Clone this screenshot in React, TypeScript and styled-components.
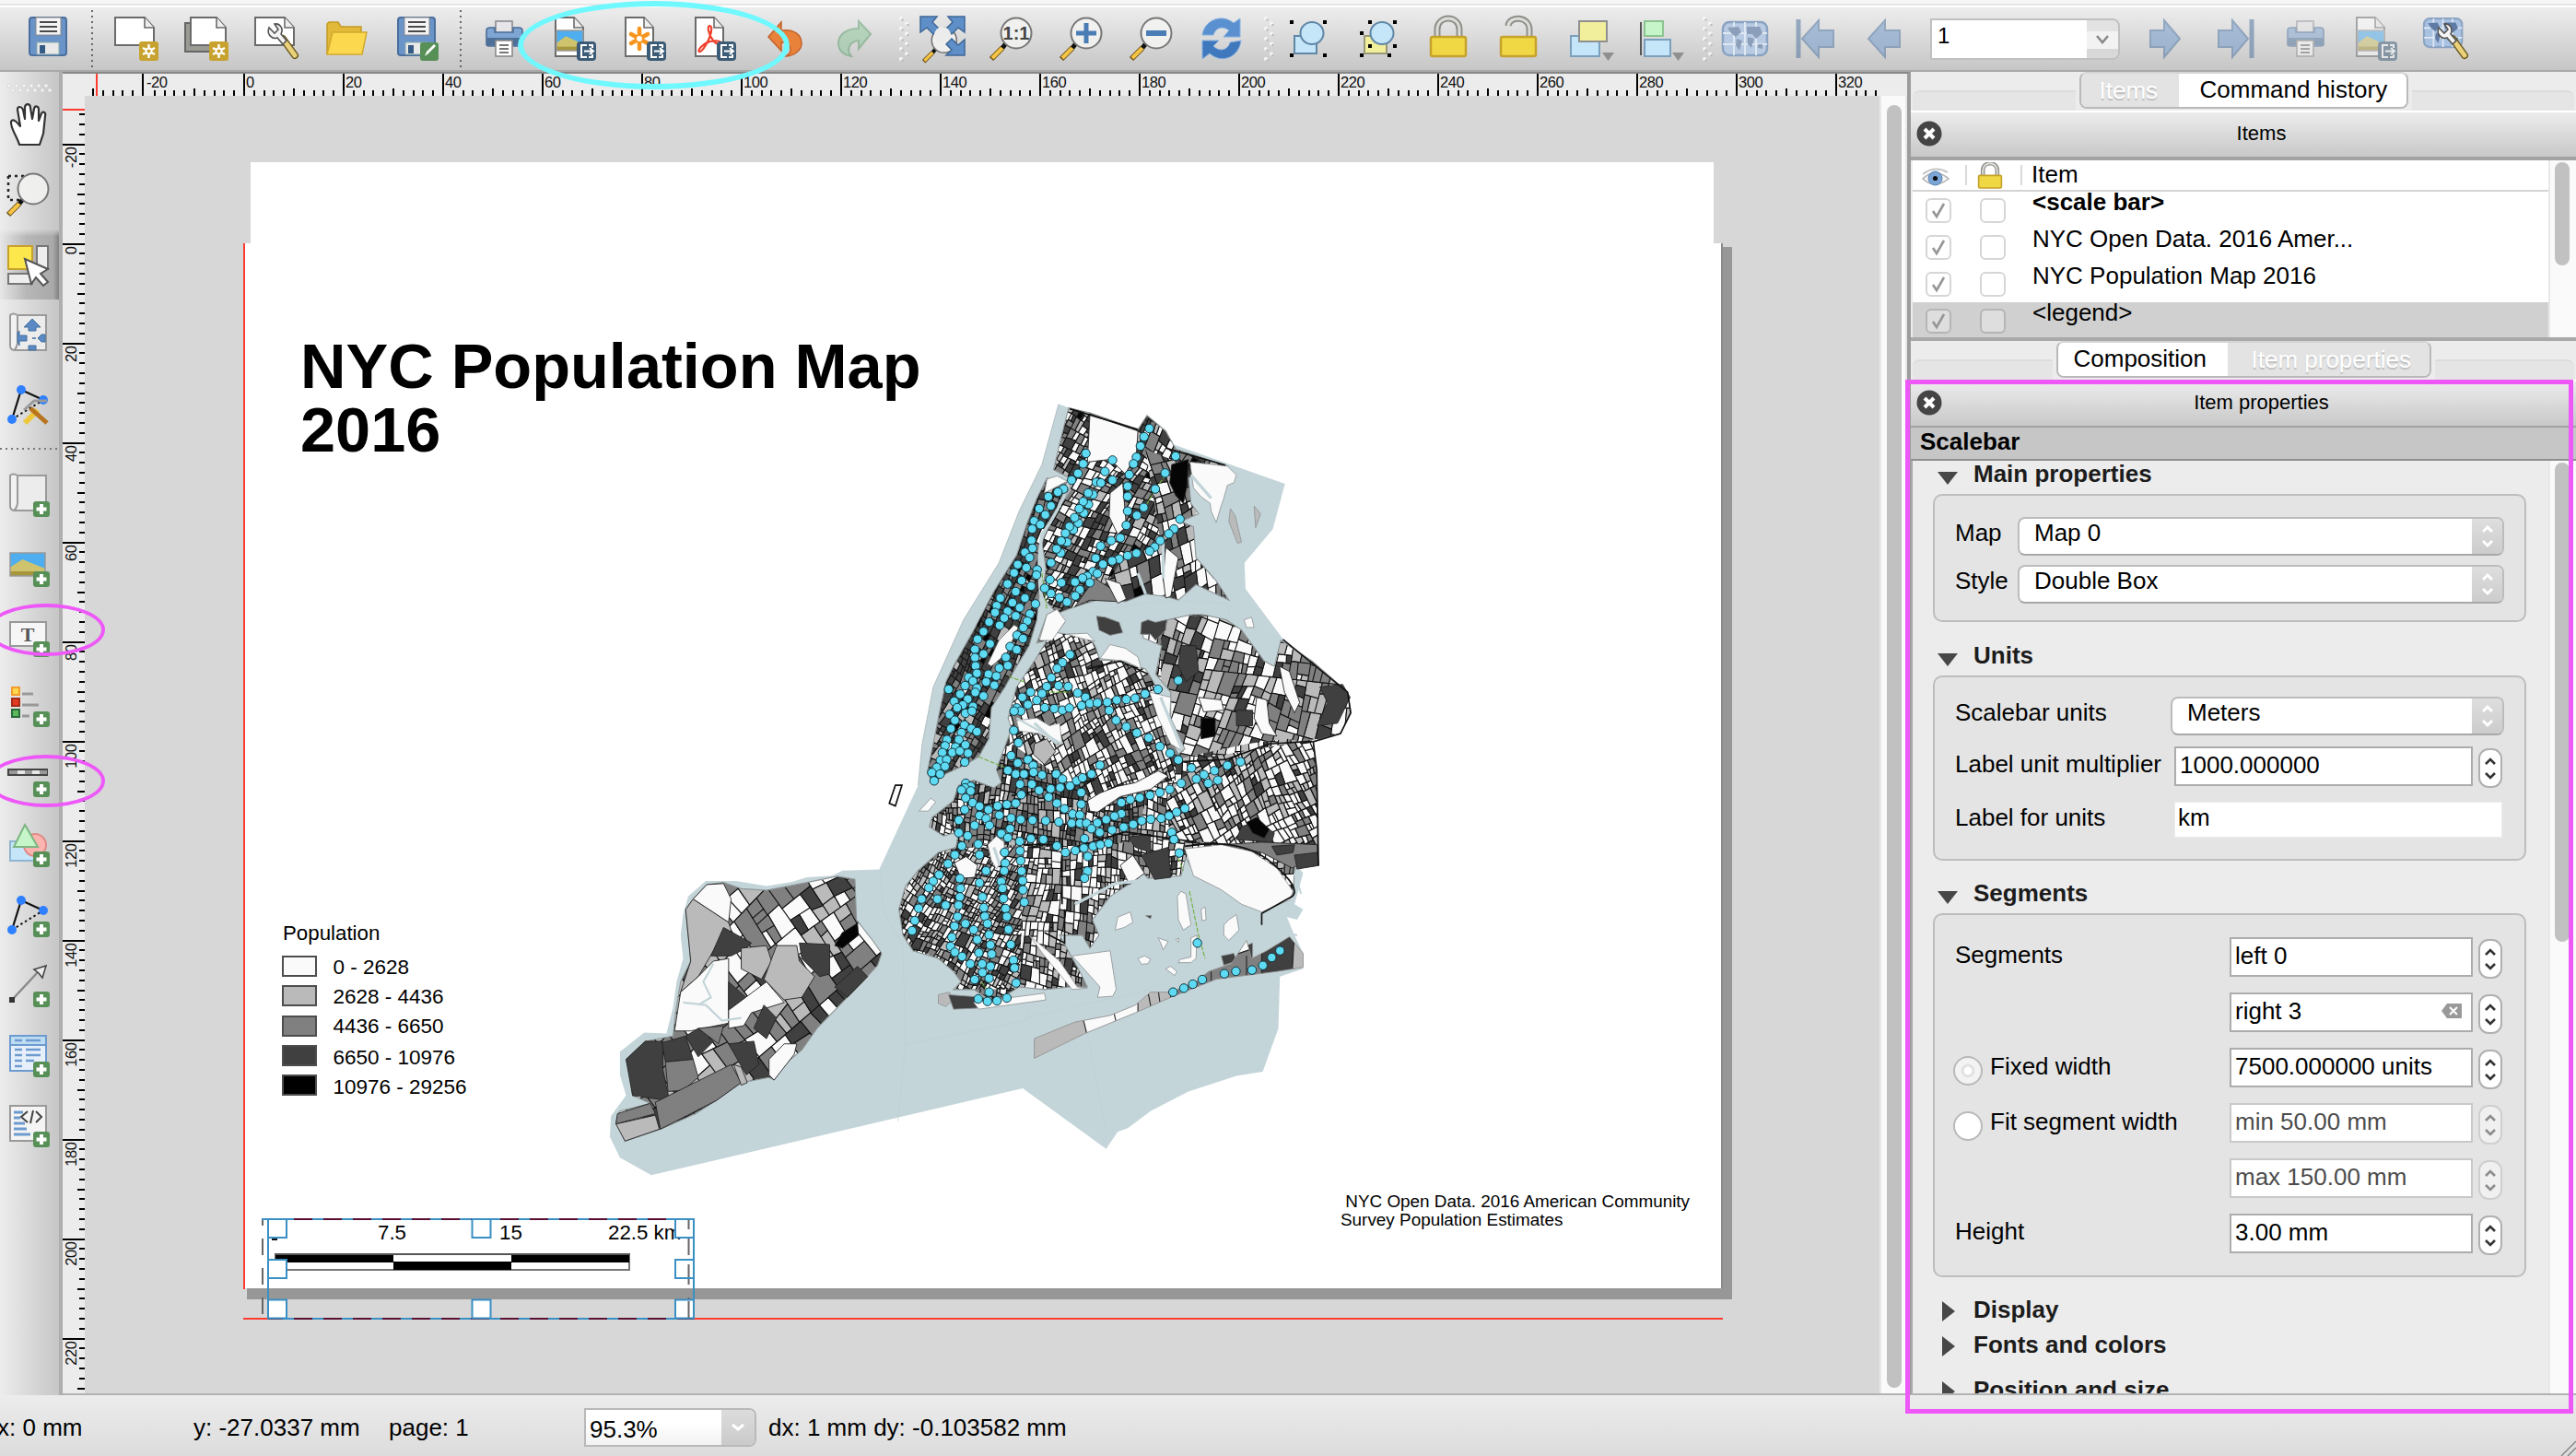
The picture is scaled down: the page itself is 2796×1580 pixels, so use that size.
import React from 'react';
import styled, { createGlobalStyle, css } from 'styled-components';

const GlobalStyle = createGlobalStyle`
  html, body { margin: 0; padding: 0; background: #ececec; }
  * { box-sizing: border-box; }
  body { font-family: "Liberation Sans", Arial, Helvetica, sans-serif; font-size: 26px; color: #000; }
`;

/* ---------- window frame ---------- */

const Window = styled.div`
  position: relative;
  display: flex;
  flex-direction: column;
  width: 2796px;
  height: 1580px;
  overflow: hidden;
  background: #ececec;
`;

const TopStrip = styled.div`
  flex: none;
  height: 8px;
  background: linear-gradient(#f6f6f6 0 4px, #e6e6e6 4px 6px, #fff 6px 8px);
`;

const Toolbar = styled.div`
  flex: none;
  display: flex;
  align-items: center;
  height: 70px;
  padding-left: 14px;
  background: linear-gradient(#ededed, #c6c6c6);
  border-bottom: 2px solid #a9a9a9;
  position: relative;
`;

const Body = styled.div`
  flex: none;
  display: flex;
  height: 1436px;
`;

const ToolSlot = styled.div<{ $faded?: boolean }>`
  flex: none;
  display: flex;
  align-items: center;
  justify-content: center;
  width: 76px;
  height: 68px;
  opacity: ${p => (p.$faded ? 0.5 : 1)};
`;

const Icon = styled.svg`
  display: block;
  width: 48px;
  height: 48px;
  overflow: visible;
`;

const VSeparator = styled.div`
  flex: none;
  width: 20px;
  height: 62px;
  background: repeating-linear-gradient(#666 0 2px, transparent 2px 6px) 9px 0 / 2px 100% no-repeat;
`;

const Grip = styled.svg<{ $w: number }>`
  flex: none;
  display: block;
  width: ${p => p.$w}px;
  height: 50px;
  overflow: visible;
`;

const PageCombo = styled.div`
  flex: none;
  display: flex;
  width: 206px;
  height: 45px;
  margin: 0 12px 0 11px;
  border: 2px solid #c0c0c0;
  border-radius: 0 8px 8px 0;
  background: #d6d6d6;
`;

const PageValue = styled.div`
  width: 168px;
  padding-left: 6px;
  background: #fff;
  line-height: 33px;
  font-size: 24px;
`;

const PageArrow = styled.div`
  flex: 1;
  display: flex;
  align-items: center;
  justify-content: center;
  padding-top: 4px;
  background: linear-gradient(#e2e2e2 0 30%, #f2f2f2 30% 75%, #d8d8d8 75%);
  border-radius: 0 6px 6px 0;
`;

/* ---------- left tools ---------- */

const SideTools = styled.div`
  flex: none;
  display: flex;
  flex-direction: column;
  width: 68px;
  padding-top: 2px;
  background: linear-gradient(90deg, #ececec, #c6c6c6);
  border-right: 4px solid #aeaeae;
`;

const SideSlot = styled.div<{ $active?: boolean }>`
  flex: none;
  display: flex;
  align-items: center;
  height: 76px;
  padding-left: 7px;
  ${p => p.$active && css`
    background: linear-gradient(90deg, rgba(0,0,0,.02), rgba(0,0,0,.16) 45%, rgba(0,0,0,.16) 90%, rgba(0,0,0,.35));
    mask-image: linear-gradient(#0000, #000 10%, #000 88%, #000);
  `}
`;

const SideGrip = styled.svg`
  flex: none;
  display: block;
  width: 64px;
  height: 17px;
  overflow: visible;
`;

const HSeparator = styled.div`
  flex: none;
  height: 22px;
  background: repeating-linear-gradient(90deg, #777 0 2px, transparent 2px 6px) 0 9px / 100% 2px no-repeat;
`;

/* ---------- centre ---------- */

const Centre = styled.div`
  flex: none;
  display: grid;
  grid-template-columns: 24px 1948px 30px;
  grid-template-rows: 24px 1408px;
  width: 2006px;
  border-top: 2px solid #888;
  border-right: 4px solid #9c9c9c;
  border-bottom: 2px solid #b2b2b2;
  background: #ececec;
`;

const HRuler = styled.svg`
  grid-column: 1 / 4;
  display: block;
  width: 2002px;
  height: 24px;
`;

const VRuler = styled.svg`
  display: block;
  width: 24px;
  height: 1408px;
`;

const Viewport = styled.div`
  position: relative;
  overflow: hidden;
  background: #d7d7d7;
`;

const ScrollTrack = styled.div`
  background: #fafafa;
  border-left: 2px solid #e8e8e8;
  border-right: 2px solid #e8e8e8;
  padding: 10px 4px 6px 6px;
`;

const ScrollThumb = styled.div<{ $h?: number }>`
  width: 16px;
  height: ${p => (p.$h ? p.$h + 'px' : '100%')};
  border-radius: 8px;
  background: #c1c1c1;
`;

/* The scene uses window pixels as its coordinate system. */
const Scene = styled.div`
  position: absolute;
  left: -92px;
  top: -104px;
  width: 2200px;
  height: 1600px;
`;

const Sheet = styled.div<{ $x: number; $y: number; $w: number; $h: number; $c: string }>`
  position: absolute;
  left: ${p => p.$x}px;
  top: ${p => p.$y}px;
  width: ${p => p.$w}px;
  height: ${p => p.$h}px;
  background: ${p => p.$c};
`;

const SceneText = styled.div<{ $x: number; $y: number; $s: number; $b?: boolean }>`
  position: absolute;
  left: ${p => p.$x}px;
  top: ${p => p.$y - p.$s * 0.8465}px;
  font-size: ${p => p.$s}px;
  font-weight: ${p => (p.$b ? 700 : 400)};
  line-height: 1;
  white-space: pre;
`;

const MapDrawing = styled.svg`
  position: absolute;
  left: 640px;
  top: 420px;
  width: 860px;
  height: 880px;
`;

const SelectionDrawing = styled.svg`
  position: absolute;
  left: 280px;
  top: 1316px;
  width: 480px;
  height: 120px;
`;

/* ---------- right dock ---------- */

const Dock = styled.div`
  flex: none;
  display: flex;
  flex-direction: column;
  width: 722px;
  border-bottom: 2px solid #b2b2b2;
`;

const TabStrip = styled.div`
  flex: none;
  display: flex;
  justify-content: center;
  height: 42px;
  padding: 0 2px;
  &::before, &::after {
    content: "";
    flex: 1;
    margin-top: 20px;
    border-top: 2px solid #dcdcdc;
    background: #e5e5e5;
  }
  &::before { margin-right: 4px; border-top-left-radius: 8px; }
  &::after { margin-left: 4px; border-top-right-radius: 8px; }
`;

const TabGroup = styled.div`
  flex: none;
  display: flex;
  height: 40px;
  border: 2px solid #b9b9b9;
  border-top-color: #d5d5d5;
  border-radius: 8px;
  overflow: hidden;
`;

const Tab = styled.div<{ $w: number; $pl: number; $lit?: boolean }>`
  width: ${p => p.$w}px;
  padding-left: ${p => p.$pl}px;
  line-height: ${p => (p.$lit ? 35 : 37)}px;
  white-space: nowrap;
  color: ${p => (p.$lit ? '#000' : '#fff')};
  background: ${p => (p.$lit ? '#fff' : '#e3e3e3')};
  text-shadow: ${p => (p.$lit ? 'none' : '0 2px 1px #bdbdbd')};
`;

const DockTitle = styled.div<{ $line: number }>`
  flex: none;
  display: grid;
  grid-template-columns: 40px 1fr;
  align-items: center;
  height: ${p => 50 + p.$line}px;
  border-top: 2px solid #fff;
  border-bottom: ${p => p.$line}px solid #a2a2a2;
  background: linear-gradient(#ececec, #c8c8c8);
  font-size: 22px;
`;

const DockName = styled.div`
  padding: 0 1px 3px 0;
  text-align: center;
`;

const CloseIcon = styled.svg`
  width: 28px;
  height: 28px;
  margin: -2px 0 0 6px;
`;

const ItemArea = styled.div`
  flex: none;
  display: flex;
  height: 196px;
  padding-left: 2px;
  border-bottom: 4px solid #a9a9a9;
`;

const ItemTable = styled.div`
  width: 690px;
  overflow: hidden;
  background: #fff;
`;

const HeadRow = styled.div`
  display: grid;
  grid-template-columns: 59px 60px 1fr;
  height: 34px;
  border-bottom: 2px solid #d4d4d4;
`;

const HeadCell = styled.div`
  display: flex;
  padding: 2px 0 0 10px;
  line-height: 26px;
  background: linear-gradient(#d9d9d9, #d9d9d9) right 5px / 2px 22px no-repeat;
  &:last-child { background: none; }
`;

const ItemRow = styled.div<{ $sel?: boolean; $bold?: boolean }>`
  display: grid;
  grid-template-columns: 59px 60px 1fr;
  height: 40px;
  background: ${p => (p.$sel ? '#d0d0d0' : '#fff')};
  font-weight: ${p => (p.$bold ? 700 : 400)};
`;

const ItemName = styled.div`
  padding-left: 11px;
  line-height: 23px;
  white-space: nowrap;
`;

const Check = styled.div<{ $dim?: boolean }>`
  display: flex;
  width: 28px;
  height: 27px;
  margin: 7px 0 0 14px;
  border: 2px solid ${p => (p.$dim ? '#b5b5b5' : '#d6d6d6')};
  border-radius: 6px;
  background: ${p => (p.$dim ? '#dedede' : '#fff')};
`;

const SideTrack = styled.div`
  width: 30px;
  padding: 2px 0 0 5px;
  background: #fafafa;
  border-left: 2px solid #e8e8e8;
`;

const Subject = styled.div`
  flex: none;
  height: 36px;
  padding-left: 10px;
  line-height: 31px;
  font-weight: 700;
  background: #c6c6c6;
  border-bottom: 2px solid #8f8f8f;
`;

const PropArea = styled.div`
  flex: 1;
  min-height: 0;
  display: flex;
  overflow: hidden;
  border-left: 2px solid #a9a9a9;
`;

const PropList = styled.div`
  width: 690px;
  padding-left: 22px;
  overflow: hidden;
`;

const SectionHead = styled.div<{ $mt?: number }>`
  display: flex;
  height: 28px;
  margin-top: ${p => p.$mt ?? 0}px;
  line-height: 29px;
  font-weight: 700;
  color: #1c1c1c;
  white-space: nowrap;
`;

const Triangle = styled.svg`
  width: 24px;
  height: 24px;
  margin: 8px 16px 0 4px;
  overflow: visible;
`;

const Group = styled.div<{ $h: number; $pt: number }>`
  width: 644px;
  height: ${p => p.$h}px;
  margin-top: 8px;
  padding: ${p => p.$pt}px 24px 0 22px;
  border: 2px solid #bdbdbd;
  border-radius: 10px;
  background: #e4e4e4;
`;

const Row = styled.div<{ $h: number }>`
  display: flex;
  align-items: flex-start;
  height: ${p => p.$h}px;
`;

const RowLabel = styled.div<{ $lh: number }>`
  flex: 1;
  display: flex;
  line-height: ${p => p.$lh}px;
  white-space: nowrap;
`;

const SelectBox = styled.div<{ $w: number }>`
  flex: none;
  display: flex;
  width: ${p => p.$w}px;
  height: 42px;
  margin-right: -2px;
  border: 2px solid #bcbcbc;
  border-bottom-color: #a8a8a8;
  border-radius: 8px;
  background: #fff;
  overflow: hidden;
`;

const SelectValue = styled.div`
  flex: 1;
  padding-left: 16px;
  line-height: 31px;
`;

const SelectArrows = styled.div`
  display: flex;
  align-items: center;
  justify-content: center;
  width: 33px;
  background: linear-gradient(#dedede, #cccccc);
`;

const Field = styled.div<{ $w: number; $dim?: boolean }>`
  flex: none;
  display: flex;
  justify-content: space-between;
  align-items: flex-start;
  width: ${p => p.$w}px;
  height: 43px;
  padding: 0 10px 0 4px;
  border: 2px solid ${p => (p.$dim ? '#c9c9c9' : '#acacac')};
  background: #fff;
  color: ${p => (p.$dim ? '#4c4c4c' : '#000')};
  line-height: 37px;
  white-space: nowrap;
`;

const ClearMark = styled.svg`
  width: 22px;
  height: 18px;
  margin-top: 9px;
`;

const PlainField = styled.div`
  flex: none;
  width: 356px;
  height: 39px;
  padding-left: 3px;
  border: 1px solid #ececec;
  background: #fff;
  line-height: 33px;
`;

const Spinner = styled.div<{ $dim?: boolean }>`
  flex: none;
  display: flex;
  align-items: center;
  justify-content: center;
  width: 26px;
  height: 43px;
  margin: 2px 0 0 6px;
  border: 2px solid ${p => (p.$dim ? '#cfcfcf' : '#b0b0b0')};
  border-radius: 11px;
  background: ${p => (p.$dim ? '#f0f0f0' : '#fff')};
`;

const Radio = styled.div<{ $on?: boolean }>`
  width: 32px;
  height: 32px;
  margin: 9px 8px 0 -2px;
  border: 2px solid #b9b9b9;
  border-radius: 50%;
  background: ${p => (p.$on ? 'radial-gradient(circle, #fff 0 4px, #dedede 5px 6px, #f3f3f3 8px)' : '#fff')};
`;

/* ---------- status bar ---------- */

const StatusBar = styled.div`
  flex: none;
  display: flex;
  height: 66px;
  padding-top: 9px;
  background: linear-gradient(#ececec, #dcdcdc);
  line-height: 52px;
  white-space: nowrap;
  overflow: hidden;
`;

const StatusCell = styled.div<{ $w: number; $ml?: number }>`
  flex: none;
  width: ${p => p.$w}px;
  margin-left: ${p => p.$ml ?? 0}px;
`;

const ZoomCombo = styled.div`
  flex: none;
  display: flex;
  width: 187px;
  height: 42px;
  margin: 5px 13px 0 0;
  border: 2px solid #b9b9b9;
  border-radius: 0 8px 8px 0;
  background: linear-gradient(#fff 40%, #f2f2f2);
  line-height: 43px;
  padding-left: 4px;
`;

const ZoomArrow = styled.div`
  display: flex;
  align-items: center;
  justify-content: center;
  width: 36px;
  margin-left: auto;
  background: linear-gradient(#dcdcdc, #cacaca);
  border-radius: 0 6px 6px 0;
`;

/* ---------- highlighter marks ---------- */

const Ring = styled.div<{ $x: number; $y: number; $w: number; $h: number; $c: string; $b: number }>`
  position: absolute;
  left: ${p => p.$x}px;
  top: ${p => p.$y}px;
  width: ${p => p.$w}px;
  height: ${p => p.$h}px;
  border: ${p => p.$b}px solid ${p => p.$c};
  border-radius: 50%;
`;

const Frame = styled.div`
  position: absolute;
  left: 2068px;
  top: 412px;
  width: 725px;
  height: 1122px;
  border: 5px solid #ee58f8;
`;

const Resizer = styled.svg`
  position: absolute;
  right: 0;
  bottom: 0;
  width: 18px;
  height: 18px;
`;

/* ---------- icon parts ---------- */

const Disk = () => (
  <g>
    <rect x="4" y="1" width="40" height="41" rx="3" fill="#6a93c7" stroke="#4a6f9f" strokeWidth="2" />
    <rect x="11" y="1" width="27" height="19" fill="#f4f4f4" stroke="#8a8a8a" />
    <path d="M15 6h19M15 11h19M15 16h19" stroke="#4a4a4a" strokeWidth="2" />
    <rect x="12" y="28" width="24" height="13" fill="#e9e9e9" stroke="#8aa" />
    <rect x="15" y="31" width="6" height="9" fill="#365a86" />
  </g>
);
const Paper = ({ x = 0, w = 44, h = 31 }: { x?: number; w?: number; h?: number }) => (
  <g transform={`translate(${x} 0)`}>
    <path d={`M1 1H${w - 11}L${w - 1} 12V${h}H1Z`} fill="#fff" stroke="#6b6b6b" strokeWidth="2" />
    <path d={`M${w - 11} 1V12H${w - 1}`} fill="#eee" stroke="#6b6b6b" strokeWidth="1.6" />
  </g>
);
const StarBadge = () => (
  <g>
    <rect x="27" y="27" width="21" height="21" rx="3" fill="#c8a22e" />
    <path d="M37.500 30v15M31 34l13 7M44 34l-13 7" stroke="#fff" strokeWidth="2.400" />
    <circle cx="37.500" cy="37.500" r="3" fill="#c8a22e" stroke="#fff" strokeWidth="2" />
  </g>
);
const ExportBadge = () => (
  <g>
    <rect x="26" y="27" width="21" height="21" rx="4" fill="#3c5b77" />
    <path d="M37 31h-6v13h6M39 31h4v3M43 41v3h-4M34 37.500h9M40 34l4 3.500l-4 3.500" stroke="#fff" strokeWidth="2" fill="none" />
  </g>
);
const PlusBadge = () => (
  <g>
    <rect x="29" y="31" width="18" height="17" rx="3" fill="#579057" />
    <path d="M38 34v11M32.500 39.500h11" stroke="#fff" strokeWidth="4" />
  </g>
);
const Wrench = () => (
  <g>
    <path d="M31 24L44 42" stroke="#6d5a22" strokeWidth="8" strokeLinecap="round" />
    <path d="M31 24L44 42" stroke="#ead27a" strokeWidth="5" strokeLinecap="round" />
    <path d="M16 12c-3 7 3 13 9 11l6 7 4-4-6-7c3-6-1-12-7-11l4 6-4 4z" fill="#f4f4f4" stroke="#555" strokeWidth="1.600" />
  </g>
);
const Photo = ({ y = 14, w = 29, h = 22 }: { y?: number; w?: number; h?: number }) => (
  <g>
    <rect x="2" y={y} width={w} height={h} fill="#4eaef0" />
    <path d={`M2 ${y + h * 0.62}L${2 + w * 0.35} ${y + h * 0.28}L${2 + w} ${y + h * 0.68}V${y + h}H2Z`} fill="#cfc36d" />
    <path d={`M2 ${y + h * 0.8}H${2 + w}V${y + h}H2Z`} fill="#a8963c" />
    <rect x="2" y={y} width={w} height={h} fill="none" stroke="#999" strokeWidth="1.500" />
  </g>
);
const Printer = () => (
  <g>
    <rect x="14" y="5" width="18" height="14" fill="#e6e6e9" stroke="#8a8a95" strokeWidth="1.600" />
    <path d="M4 15q0-3 4-3h5v5h20v-5h6q4 0 4 3v15q0 2-3 2H7q-3 0-3-2z" fill="#7fa5d2" stroke="#4a6b96" strokeWidth="1.600" />
    <path d="M4 23h39v8H4z" fill="#4d7099" />
    <rect x="14" y="26" width="18" height="17" fill="#fff" stroke="#8a8a8a" strokeWidth="1.600" />
    <path d="M18 31h10M18 35h10M18 39h10" stroke="#777" strokeWidth="2" />
  </g>
);
const Lens = ({ children }: { children?: React.ReactNode }) => (
  <g>
    <path d="M14 34L2 46" stroke="#6b4e14" strokeWidth="6" />
    <path d="M14 34L3 45" stroke="#f5c445" strokeWidth="4" />
    <path d="M18 29l-4 5" stroke="#111" strokeWidth="5" />
    <circle cx="29" cy="18" r="16.500" fill="#f3f4f2" fillOpacity=".85" stroke="#777" strokeWidth="2" />
    {children}
  </g>
);
const Lock = ({ open }: { open?: boolean }) => (
  <g>
    <path
      d={open ? 'M36 23V14C36 -1 14 -1 13 10' : 'M12 23V14C12 -2 36 -2 36 14V23'}
      fill="none" stroke="#8f8f8a" strokeWidth="7" />
    <path
      d={open ? 'M36 23V14C36 -1 14 -1 13 10' : 'M12 23V14C12 -2 36 -2 36 14V23'}
      fill="none" stroke="#dcdcd8" strokeWidth="3" />
    <rect x="5" y="22" width="38" height="21" rx="2" fill="#efd843" stroke="#c6a12c" strokeWidth="2.500" />
  </g>
);
const Dots = ({ pts }: { pts: number[][] }) => (
  <g>{pts.map(([x, y], i) => <rect key={i} x={x - 2} y={y - 2} width="4" height="4" fill="#000" />)}</g>
);
const GlobeTile = ({ land = '#8b9fbb', tile = '#b9cbe2' }: { land?: string; tile?: string }) => (
  <g>
    <rect x="0" y="6" width="48" height="36" rx="7" fill={tile} stroke="#8ba3c2" strokeWidth="2.500" />
    <path d="M12 6v36M24 6v36M36 6v36M0 18h48M0 30h48" stroke="#dfe8f2" strokeWidth="2" />
    <path d="M5 12l12-1 3 6-6 5-5-4zM15 24l6 2-3 11-4-6zM26 11l14 0 3 7-7 6-4-5-6 0zM27 22l7 2-3 10-4-4zM38 30l5 0 0 5-5-1z" fill={land} />
  </g>
);
const Scroll = () => (
  <g>
    <path d="M13 3H43V41H8" fill="#ececec" stroke="#9a9a9a" strokeWidth="2" />
    <path d="M4 3q3-3 8 0V33q-1 6-4 8-4-1-4-5z" fill="#f2f2f2" stroke="#9a9a9a" strokeWidth="2" />
  </g>
);
const NodePath = () => (
  <g>
    <path d="M6 40L16 8L40 19" stroke="#111" strokeWidth="2.200" fill="none" />
    <path d="M6 40L40 19" stroke="#111" strokeWidth="2" strokeDasharray="2.500 3" />
    <circle cx="6" cy="40" r="5" fill="#2f80ff" />
    <circle cx="16" cy="8" r="5" fill="#2f80ff" />
    <circle cx="40" cy="19" r="5" fill="#2f80ff" />
  </g>
);
const ArrowLeft = <path d="M24 4V15H40V33H24V44L6 24Z" fill="#6a96cc" stroke="#476e9e" strokeWidth="2" />;
const ArrowRight = <path d="M22 4V15H7V33H22V44L39 24Z" fill="#6a96cc" stroke="#476e9e" strokeWidth="2" />;

type Tool = { id: string; draw: React.ReactNode; faded?: boolean };

const fileTools: Tool[] = [
  { id: 'new', draw: <><Paper /><StarBadge /></> },
  { id: 'duplicate', draw: <><path d="M1 7H36V38H1Z" fill="#9b9b93" stroke="#666" strokeWidth="2" /><Paper x={6} w={40} /><StarBadge /></> },
  { id: 'manager', draw: <><Paper /><Wrench /></> },
  { id: 'open', draw: <><path d="M3 41V8l2-2h10l3 5h22v6" fill="#e3b93a" stroke="#c29a25" strokeWidth="1.500" /><path d="M3 41L9 17H46L41 41Z" fill="#fbd84e" stroke="#d2a92c" strokeWidth="1.500" /></> },
  { id: 'saveas', draw: <><Disk /><rect x="28" y="28" width="20" height="20" rx="3" fill="#579057" /><path d="M33 43l2-5 8-8 2 2-8 8z" fill="#fff" /></> },
];
const exportTools: Tool[] = [
  { id: 'print', draw: <Printer /> },
  { id: 'image', draw: <><Paper x={2} w={32} h={43} /><g transform="translate(2 1)"><Photo /></g><ExportBadge /></> },
  { id: 'svg', draw: <><Paper x={2} w={32} h={43} /><path d="M18 13v22M9 19l18 10M27 19L9 29" stroke="#f7941e" strokeWidth="4.600" strokeLinecap="round" /><circle cx="18" cy="24" r="3" fill="#fff" /><ExportBadge /></> },
  { id: 'pdf', draw: <><Paper x={2} w={32} h={43} /><path d="M18 10c-2 0-2 8 4 16 4 5 8 4 8 2s-10-3-16 1-9 8-7 9 8-7 11-15 3-13 0-13" stroke="#f0402c" strokeWidth="2.200" fill="none" /><ExportBadge /></> },
  { id: 'undo', draw: <path d="M6 22L20 6V15C34 13 42 20 42 29C42 37 33 43 25 43C32 39 33 29 20 28V37Z" fill="#e8823a" stroke="#c4622a" strokeWidth="1.500" /> },
  { id: 'redo', faded: true, draw: <path d="M41 19L28 5V13C14 13 6 20 6 29C6 37 12 42 20 43C14 36 18 27 28 26V35Z" fill="#8dc89a" stroke="#5a9a68" strokeWidth="2" /> },
];
const zoomTools: Tool[] = [
  {
    id: 'full',
    draw: (
      <>
        <g transform="translate(3 11) scale(.82)"><Lens /></g>
        <path d="M0 0H18L13 6L20 13L14 19L7 12L0 17ZM48 0H30L35 6L28 13L34 19L41 12L48 17ZM48 42H28L34 36L28 30L34 24L41 31L48 25Z" transform="translate(1 0)" fill="#5f8fc9" stroke="#3f6796" strokeWidth="1.500" />
        <circle cx="25" cy="20" r="9" fill="#ececec" />
      </>
    ),
  },
  { id: 'actual', draw: <Lens><text x="29" y="25" fontSize="20" fontWeight="700" textAnchor="middle" fill="#444" fontFamily="Liberation Sans">1:1</text></Lens> },
  { id: 'in', draw: <Lens><path d="M29 7v22M18 18h22" stroke="#4a7db5" strokeWidth="5" /></Lens> },
  { id: 'out', draw: <Lens><path d="M18 18h22" stroke="#4a7db5" strokeWidth="6" /></Lens> },
  { id: 'refresh', draw: <><path d="M3 20C5 4 24-4 37 7L44 2V22H26L32 15C24 9 17 13 15 20Z" fill="#5b90d0" stroke="#86b0e0" strokeWidth="1" /><path d="M45 26C43 44 24 52 11 40L3 46V26H21L15 32C22 39 31 36 33 28Z" fill="#3f78bd" stroke="#86b0e0" strokeWidth="1" /></> },
];
const arrangeTools: Tool[] = [
  { id: 'group', draw: <><rect x="9" y="21" width="24" height="19" fill="#c5e5f9" stroke="#5f87a6" strokeWidth="2" /><ellipse cx="28" cy="18" rx="12.500" ry="12" fill="#c5e5f9" stroke="#5f87a6" strokeWidth="2" /><Dots pts={[[6, 6], [42, 6], [6, 42], [42, 42]]} /></> },
  { id: 'ungroup', draw: <><rect x="9" y="21" width="24" height="19" fill="#f1ee9c" stroke="#9a9a7a" strokeWidth="2" /><ellipse cx="28" cy="18" rx="12.500" ry="12" fill="#c5e5f9" stroke="#5f87a6" strokeWidth="2" /><Dots pts={[[15, 6], [42, 6], [6, 18], [6, 42], [36, 42], [42, 32], [15, 32]]} /></> },
  { id: 'lock', draw: <Lock /> },
  { id: 'unlock', draw: <Lock open /> },
  { id: 'raise', draw: <><rect x="5" y="21" width="31" height="22" fill="#c5e5f9" stroke="#7aa0bd" strokeWidth="2" /><rect x="14" y="5" width="30" height="22" fill="#f1ee9c" stroke="#8f8f8f" strokeWidth="2" /><path d="M39 39h13l-6.500 9z" fill="#8f8f8f" /></> },
  { id: 'align', draw: <><path d="M5 6V42" stroke="#555" strokeWidth="2" /><rect x="9" y="5" width="20" height="16" fill="#c6f5c9" stroke="#8cc490" strokeWidth="2" /><rect x="9" y="25" width="28" height="18" fill="#c5e5f9" stroke="#7aa0bd" strokeWidth="2" /><path d="M39 39h13l-6.500 9z" fill="#8f8f8f" /></> },
];
const atlasLeft: Tool[] = [
  { id: 'preview', draw: <GlobeTile /> },
  { id: 'first', faded: true, draw: <><path d="M6 3V45" stroke="#476e9e" strokeWidth="5" /><g transform="translate(4 0)">{ArrowLeft}</g></> },
  { id: 'prev', faded: true, draw: <>{ArrowLeft}</> },
];
const atlasRight: Tool[] = [
  { id: 'next', faded: true, draw: <>{ArrowRight}</> },
  { id: 'last', faded: true, draw: <><g transform="translate(-2 0)">{ArrowRight}</g><path d="M41 3V45" stroke="#476e9e" strokeWidth="5" /></> },
  { id: 'aprint', faded: true, draw: <Printer /> },
  { id: 'aexport', faded: true, draw: <><Paper x={2} w={32} h={43} /><g transform="translate(2 1)"><Photo /></g><ExportBadge /></> },
  { id: 'asettings', draw: <><g transform="translate(0 -3) scale(.86)"><GlobeTile land="#5f7ba3" tile="#a9c2e2" /></g><Wrench /></> },
];

const sideA: Tool[] = [
  { id: 'pan', draw: <path d="M14 46C12 38 4 28 5 21C7 17 11 21 15 26L12 8C12 4 16 4 18 8L20 18L20 5C21 1 26 1 26 6L28 18L30 7C31 3 35 4 35 8L35 20L38 12C40 9 43 11 42 15L40 34L36 46Z" fill="#fff" stroke="#333" strokeWidth="2.200" strokeLinejoin="round" /> },
  { id: 'zoom', draw: <><path d="M2 4H22M2 4V30H14" stroke="#222" strokeWidth="2.500" strokeDasharray="3 4" fill="none" /><Lens /></> },
  { id: 'select', draw: <><rect x="2" y="4" width="26" height="25" fill="#fce84c" stroke="#c6a12c" strokeWidth="2" /><rect x="33" y="4" width="12" height="25" fill="#eee" stroke="#777" strokeWidth="2" /><rect x="2" y="34" width="26" height="11" fill="#eee" stroke="#777" strokeWidth="2" /><path d="M20 18L45 29L37 34L45 43L40 47L32 38L27 45Z" fill="#fff" stroke="#555" strokeWidth="2" /></> },
  { id: 'content', draw: <><Scroll /><path d="M28 7L37 16H32V20H24V16H19ZM28 28l4 0v0zM24 36h8v5h-8zM14 20v5h8v6h-8v5l-2-4V22zM42 24h-4l-4 4 4 4h4z" fill="#5b8ac4" stroke="#44709f" /></> },
  { id: 'nodes', draw: <><NodePath /><path d="M20 44L34 30" stroke="#ecc83a" strokeWidth="6" /><path d="M44 44L26 28" stroke="#b9741f" strokeWidth="5" /><path d="M19 30L30 20L44 20" stroke="#999" strokeWidth="3" fill="none" /></> },
];
const sideB: Tool[] = [
  { id: 'map', draw: <><Scroll /><PlusBadge /></> },
  { id: 'picture', draw: <><g transform="translate(2 0)"><Photo y={11} w={38} h={25} /></g><PlusBadge /></> },
  { id: 'label', draw: <><rect x="4" y="10" width="39" height="26" fill="#f6f6f6" stroke="#999" strokeWidth="2" /><text x="23" y="31" fontSize="22" fontWeight="700" textAnchor="middle" fill="#555" fontFamily="Liberation Serif">T</text><PlusBadge /></> },
  { id: 'legend', draw: <><rect x="6" y="5" width="8" height="8" fill="#fbd84e" stroke="#f39c2a" strokeWidth="2" /><rect x="6" y="17" width="8" height="8" fill="#e33b22" stroke="#a52a17" strokeWidth="2" /><rect x="6" y="29" width="8" height="8" fill="#5bb95b" stroke="#2a6a3a" strokeWidth="2" /><path d="M17 12h12M17 24h18M17 36h8" stroke="#999" strokeWidth="3" /><PlusBadge /></> },
  { id: 'scalebar', draw: <><rect x="2" y="18" width="42" height="6" fill="#e6e6e6" stroke="#444" strokeWidth="2" /><path d="M3 21h9M20 21h8M36 21h8" stroke="#999" strokeWidth="4" /><PlusBadge /></> },
  { id: 'shape', draw: <><rect x="4" y="20" width="30" height="21" fill="#c5e5f9" stroke="#8fb5d0" strokeWidth="2" /><circle cx="31" cy="24" r="12" fill="#fbb4b0" stroke="#e08a86" strokeWidth="2" /><path d="M20 2L34 26H8Z" fill="#c6f5c9" stroke="#7cb582" strokeWidth="2" /><PlusBadge /></> },
  { id: 'node', draw: <><NodePath /><PlusBadge /></> },
  { id: 'arrow', draw: <><path d="M6 40L34 10" stroke="#8a8a8a" strokeWidth="2.500" /><rect x="3" y="37" width="6" height="6" fill="#333" /><path d="M30 7L43 3L39 16L35 11Z" fill="#eee" stroke="#444" strokeWidth="1.600" /><PlusBadge /></> },
  { id: 'table', draw: <><rect x="4" y="3" width="39" height="38" fill="#e6effa" stroke="#6d9bd0" strokeWidth="2" /><rect x="4" y="3" width="39" height="10" fill="#bcdcf2" stroke="#6d9bd0" strokeWidth="2" /><path d="M9 8h8M21 8h16M9 18h8M21 18h16M9 24h8M21 24h16M9 30h8M21 30h9M9 36h8" stroke="#6d9bd0" strokeWidth="2.500" /><PlusBadge /></> },
  { id: 'html', draw: <><rect x="4" y="3" width="39" height="38" fill="#f4f4f4" stroke="#999" strokeWidth="2" /><path d="M8 10h10M8 16h7M8 22h12M8 28h14M8 34h18" stroke="#6d9bd0" strokeWidth="3" /><path d="M23 9L16 15L23 21M32 9L38 15L32 21M29 8L26 22" stroke="#444" strokeWidth="2" fill="none" /><PlusBadge /></> },
];

const Tools = ({ items }: { items: Tool[] }) => (
  <>
    {items.map(t => (
      <ToolSlot key={t.id} $faded={t.faded}><Icon viewBox="0 0 48 48">{t.draw}</Icon></ToolSlot>
    ))}
  </>
);

const GripDots = ({ x = 10 }: { x?: number }) => (
  <Grip $w={x < 0 ? 0 : 18}>
    {Array.from({ length: 9 }, (_, i) => (
      <g key={i}>
        <circle cx={x + (i % 2 ? 8 : 2)} cy={3 + i * 5.5} r="2" fill="#f7f7f7" />
        <circle cx={x + (i % 2 ? 9.5 : 3.5)} cy={4.5 + i * 5.5} r="1.3" fill="#bdbdbd" />
      </g>
    ))}
  </Grip>
);

/* ---------- rulers ---------- */

const ticksH = Array.from({ length: 180 }, (_, i) => -30 + i * 2).filter(u => u <= 334);
const ticksV = Array.from({ length: 140 }, (_, i) => -26 + i * 2).filter(u => u <= 230);

const HorizontalRuler = () => (
  <HRuler>
    {ticksH.map(u => {
      const x = Math.round(264 + u * 5.4 - (u <= -20 ? 2 : 0)) - 68;
      if (x < 24) return null;
      const top = u % 20 === 0 ? 0 : u % 10 === 0 ? 16 : 18;
      return <rect key={u} x={x} y={top} width="2" height={24 - top} fill="#000" />;
    })}
    {ticksH.filter(u => u % 20 === 0 && u >= -20).map(u => (
      <text key={u} x={264 + u * 5.4 - 65} y="14.500" fontSize="16.500" letterSpacing="-.4" fill="#111">{u}</text>
    ))}
    <rect x="36" y="0" width="2" height="24" fill="#ff3b30" />
  </HRuler>
);

const VerticalRuler = () => (
  <VRuler>
    {ticksV.map(u => {
      const y = Math.round(263.5 + u * 5.4) - 104;
      const left = u % 20 === 0 ? 0 : u % 10 === 0 ? 16 : 18;
      return <rect key={u} x={left} y={y} width={24 - left} height="2" fill="#000" />;
    })}
    {ticksV.filter(u => u % 20 === 0).map(u => (
      <text key={u} transform={`translate(14.5 ${263.5 + u * 5.4 - 104 + 4}) rotate(-90)`} textAnchor="end" fontSize="16.500" letterSpacing="-.4" fill="#111">{u}</text>
    ))}
    <rect x="0" y="14" width="24" height="2" fill="#ff3b30" />
  </VRuler>
);

/* ---------- map ---------- */

const SHADES = ['#fafafa', '#bababa', '#808080', '#404040', '#050505'];

function rng(seed: number) {
  let s = seed;
  return () => {
    s = (s * 1664525 + 1013904223) % 4294967296;
    return s / 4294967296;
  };
}

type District = { id: string; poly: string; box: [number, number, number, number]; angle: number; size: number; mix: number[]; seed: number; line: number };

function tracts(d: District): string[] {
  const rand = rng(d.seed);
  const paths = SHADES.map(() => '');
  const [x0, y0, x1, y1] = d.box;
  const pad = Math.max(x1 - x0, y1 - y0) * 0.3;
  const cut = (q: number[][], depth: number) => {
    const w = Math.hypot(q[1][0] - q[0][0], q[1][1] - q[0][1]);
    const h = Math.hypot(q[3][0] - q[0][0], q[3][1] - q[0][1]);
    const limit = d.size * (0.65 + rand() * 1.1);
    if ((w < limit && h < limit * 1.6) || depth > 15) {
      let r = rand();
      let k = 0;
      while (k < 4 && r > d.mix[k]) { r -= d.mix[k]; k++; }
      paths[k] += 'M' + q.map(p => p[0].toFixed(1) + ' ' + p[1].toFixed(1)).join('L') + 'Z';
      return;
    }
    const a = 0.34 + rand() * 0.32;
    const b = Math.min(0.7, Math.max(0.3, a + (rand() - 0.5) * 0.2));
    const mix = (p: number[], r: number[], t: number) => [p[0] + (r[0] - p[0]) * t, p[1] + (r[1] - p[1]) * t];
    if (w * 1.3 > h) {
      const m = mix(q[0], q[1], a), n = mix(q[3], q[2], b);
      cut([q[0], m, n, q[3]], depth + 1);
      cut([m, q[1], q[2], n], depth + 1);
    } else {
      const m = mix(q[0], q[3], a), n = mix(q[1], q[2], b);
      cut([q[0], q[1], n, m], depth + 1);
      cut([m, n, q[2], q[3]], depth + 1);
    }
  };
  cut([[x0 - pad, y0 - pad], [x1 + pad, y0 - pad], [x1 + pad, y1 + pad], [x0 - pad, y1 + pad]], 0);
  return paths;
}

const WATER = '928,33 1376,187 1352,275 1296,340 1298,390 1372,487 1400,520 1380,900 1412,940 1395,1000 1412,1010 1400,1030 1380,1025 1395,1060 1412,1095 1412,1125 1366,1140 1363,1240 1332,1324 1280,1332 1185,1362 1110,1400 1065,1433 1045,1440 1022,1473 857,1356 122,1524 60,1490 40,1450 42,1410 72,1370 60,1330 60,1285 108,1248 152,1250 165,1200 172,1150 185,1105 180,1060 185,1020 195,985 230,955 290,955 350,965 400,957 430,948 480,945 500,935 573,933 650,770 658,690 680,580 740,450 810,340 850,240 895,150';

const QUEENS_BROOKLYN = '828,640 845,580 880,530 905,490 885,495 905,440 925,430 940,455 925,475 945,478 985,478 1000,500 1010,528 1040,528 1100,545 1122,580 1118,600 1140,660 1165,710 1178,700 1150,640 1150,590 1120,555 1132,500 1095,485 1097,460 1145,450 1190,440 1215,440 1260,450 1290,470 1335,530 1355,540 1368,490 1430,530 1500,590 1507,630 1485,670 1432,685 1438,740 1442,840 1443,925 1395,932 1392,985 1330,1012 1300,1000 1255,970 1200,945 1180,910 1170,945 1105,950 1085,930 1085,950 1030,985 995,1030 1008,1060 990,1085 975,1060 930,1060 970,1130 985,1160 950,1160 900,1165 850,1160 800,1190 760,1165 720,1165 735,1150 720,1130 690,1105 640,1090 620,1060 612,1010 625,965 650,935 690,900 725,890 730,860 700,868 672,850 678,832 720,800 730,770 760,760 800,775 815,765 805,740 820,700 835,660';
const MANHATTAN = '905,176 945,185 948,200 925,235 897,280 888,330 890,400 885,450 870,500 842,545 822,580 795,620 790,680 770,715 740,732 700,750 680,768 668,745 680,690 690,640 705,570 720,540 760,470 800,395 845,325 865,265 885,215';
const BRONX = '948,40 990,50 1085,82 1103,55 1140,85 1160,120 1262,152 1240,165 1185,175 1190,225 1205,245 1170,260 1195,270 1200,330 1240,375 1265,412 1200,382 1165,412 1140,405 1100,400 1060,415 1010,410 960,425 925,438 895,405 903,350 895,300 920,245 952,200 948,175 918,160 930,110';
const STATEN = '232,962 265,958 300,970 350,973 430,958 490,946 525,952 528,1030 560,1070 578,1095 570,1118 540,1150 500,1190 450,1240 420,1282 385,1310 365,1340 355,1335 300,1345 250,1380 210,1405 140,1435 70,1458 52,1420 60,1400 120,1385 85,1370 80,1330 72,1300 110,1265 165,1255 170,1210 180,1150 200,1110 190,1010 205,990';
const ROCKAWAY = '880,1260 960,1228 1030,1215 1080,1195 1110,1170 1150,1170 1200,1150 1225,1130 1270,1115 1300,1070 1310,1105 1340,1090 1385,1063 1412,1095 1412,1122 1360,1130 1240,1145 1150,1180 1080,1210 980,1250 880,1298';

const districts: District[] = [
  { id: 'statenIsland', poly: STATEN, box: [50, 940, 580, 1460], angle: -38, size: 34, mix: [0.2, 0.28, 0.36, 0.16], seed: 11, line: 2 },
  { id: 'bronx', poly: BRONX, box: [880, 40, 1270, 440], angle: 24, size: 14, mix: [0.24, 0.16, 0.28, 0.3], seed: 5, line: 2 },
  { id: 'bronxEast', poly: '1100,120 1200,160 1200,330 1270,412 1140,410 1000,415 1050,340 1130,300', box: [1000, 100, 1270, 430], angle: -14, size: 22, mix: [0.28, 0.18, 0.3, 0.22], seed: 8, line: 2 },
  { id: 'manhattan', poly: MANHATTAN, box: [660, 170, 960, 770], angle: 28, size: 13, mix: [0.04, 0.08, 0.3, 0.52], seed: 3, line: 1.8 },
  { id: 'queensBase', poly: QUEENS_BROOKLYN, box: [600, 430, 1510, 1200], angle: 8, size: 14, mix: [0.46, 0.22, 0.2, 0.12], seed: 7, line: 2 },
  { id: 'queensWest', poly: '828,650 845,560 930,470 1010,500 1110,545 1160,700 1160,760 980,800 835,720', box: [820, 460, 1170, 800], angle: -24, size: 14, mix: [0.52, 0.14, 0.22, 0.12], seed: 21, line: 2 },
  { id: 'queensEast', poly: '1132,440 1260,445 1368,488 1510,590 1510,690 1430,690 1380,680 1300,690 1160,720 1130,560', box: [1120, 430, 1510, 730], angle: 12, size: 22, mix: [0.28, 0.27, 0.3, 0.15], seed: 31, line: 2 },
  { id: 'queensSouth', poly: '1200,720 1440,680 1442,930 1250,880 1150,880 1140,800', box: [1130, 680, 1450, 930], angle: -28, size: 15, mix: [0.5, 0.22, 0.2, 0.08], seed: 37, line: 2.2 },
  { id: 'brooklynNorth', poly: '730,760 835,690 1000,800 1100,800 1080,880 900,890 730,880 700,820', box: [690, 680, 1110, 900], angle: 7, size: 12, mix: [0.14, 0.22, 0.42, 0.22], seed: 41, line: 2.1 },
  { id: 'brooklynWest', poly: '612,1010 640,935 730,890 860,890 850,1165 720,1165 690,1105 612,1070', box: [600, 880, 870, 1170], angle: 28, size: 11, mix: [0.34, 0.24, 0.3, 0.12], seed: 43, line: 2 },
];

const patches: [number, string][] = [
  [1, '205,990 275,1035 280,1050 245,1090 215,1140 180,1170 200,1110 190,1010'],
  [0, '232,962 265,960 280,990 275,1035 205,990'],
  [3, '265,1045 320,1075 310,1085 280,1100 240,1100'],
  [1, '300,1085 350,1080 360,1110 340,1145 300,1125'],
  [1, '370,1080 410,1080 415,1110 445,1140 420,1180 385,1185 345,1145'],
  [3, '415,1075 475,1078 475,1135 455,1140 420,1105'],
  [4, '485,1080 500,1055 530,1037 532,1060 500,1085'],
  [0, '245,1110 275,1105 275,1230 200,1245 168,1245 180,1170 215,1140'],
  [3, '275,1150 315,1185 275,1205'],
  [0, '275,1205 350,1150 385,1190 320,1210 305,1235 275,1240'],
  [3, '485,1160 530,1120 550,1140 510,1180'],
  [3, '72,1300 110,1265 145,1265 145,1320 158,1380 85,1370'],
  [3, '143,1268 190,1255 205,1300 150,1305'],
  [2, '150,1305 205,1300 215,1335 185,1360 155,1362'],
  [3, '190,1255 215,1240 245,1265 215,1295'],
  [2, '215,1240 265,1235 255,1270'],
  [3, '275,1270 325,1265 335,1310 310,1330'],
  [2, '130,1383 280,1310 300,1345 250,1380 210,1400 140,1435'],
  [1, '285,1310 300,1315 312,1345 300,1350'],
  [2, '55,1405 120,1385 130,1405 52,1425'],
  [1, '52,1425 130,1408 138,1435 70,1458'],
  [3, '345,1195 370,1220 350,1260 325,1240'],
  [0, '355,1300 385,1270 410,1270 405,1290 365,1340 355,1330'],
  [0, '990,53 1085,85 1082,130 1060,168 1030,140 985,145'],
  [0, '1030,205 1055,185 1062,270 1045,285 1028,250'],
  [4, '1152,150 1185,140 1182,190 1175,225 1160,210 1148,185'],
  [0, '1140,310 1165,330 1150,405 1140,408 1135,370'],
  [2, '1000,370 1040,395 1050,415 990,412 960,425'],
  [0, '1020,370 1050,380 1062,410 1045,418'],
  [3, '1170,500 1200,500 1205,550 1180,570 1165,540'],
  [4, '1210,640 1238,640 1238,675 1210,680'],
  [3, '1280,625 1312,625 1312,655 1280,655'],
  [3, '1445,580 1490,575 1505,600 1480,650 1440,655 1460,610'],
  [0, '985,800 1010,785 1045,772 1080,765 1125,742 1145,752 1110,778 1050,792 1005,822 990,820'],
  [0, '722,920 745,908 768,925 762,948 735,950'],
  [1, '880,690 905,680 922,705 900,730 878,710'],
  [3, '1290,850 1320,840 1355,862 1350,880 1280,875'],
  [4, '1300,842 1320,832 1345,855 1335,872 1312,862'],
  [2, '1180,880 1250,885 1330,880 1440,885 1440,915 1390,930 1330,900 1250,885'],
  [3, '1350,888 1395,885 1392,900 1360,905'],
  [3, '1395,905 1440,900 1443,925 1400,932'],
  [3, '1092,905 1145,890 1150,948 1118,952'],
  [0, '1050,925 1075,905 1098,940 1068,962'],
  [3, '1065,870 1110,865 1110,900 1080,890'],
  [0, '1320,600 1340,605 1345,650 1360,675 1330,670 1315,640'],
  [0, '1365,540 1385,550 1405,610 1395,630 1375,590'],
  [0, '1205,600 1250,605 1255,625 1215,628'],
];

const islands: [number, string][] = [
  [0, '1188,145 1262,153 1280,170 1275,185 1262,190 1255,215 1248,235 1240,262 1230,240 1228,225 1210,212 1195,195'],
  [0, '905,178 925,172 945,182 900,205'],
  [0, '1010,525 1030,498 1060,505 1085,522 1092,545 1060,530'],
  [0, '945,478 985,476 1000,492 970,485'],
  [0, '890,490 905,440 925,430 942,452 915,490'],
  [3, '1003,443 1020,445 1048,455 1055,475 1030,480 1008,470'],
  [3, '1092,455 1105,450 1120,455 1142,450 1140,470 1120,490 1110,478 1090,478'],
  [0, '1108,590 1150,600 1148,640 1175,705 1150,690 1125,640'],
  [0, '788,885 805,868 820,880 822,905 805,932 795,915'],
  [0, '845,645 885,640 910,655 930,650 935,690 910,680 890,670 850,665'],
  [0, '1178,893 1250,885 1310,898 1360,930 1392,975 1385,992 1330,1015 1290,1000 1250,972 1195,945'],
  [0, '955,1100 1030,1090 1042,1165 1035,1178 1005,1180 1010,1160'],
  [0, '870,1060 930,1110 965,1160 985,1162 955,1165 900,1100'],
  [0, '1045,1025 1070,1015 1075,1035 1058,1045 1040,1050'],
  [0, '1163,985 1170,975 1180,980 1190,1040 1175,1050 1165,1030'],
  [0, '1085,1105 1098,1100 1110,1106 1105,1115 1092,1116'],
  [0, '1125,1065 1145,1072 1135,1088 1130,1075'],
  [0, '1210,1010 1218,1005 1220,1030 1212,1032'],
  [3, '1100,1022 1112,1022 1110,1028'],
  [0, '1160,1068 1166,1066 1165,1074'],
  [0, '1255,1040 1265,1030 1280,1020 1285,1050 1265,1070 1255,1060'],
  [0, '1190,1065 1202,1060 1200,1105 1190,1113 1165,1113 1168,1107 1190,1102'],
  [0, '1140,1125 1150,1120 1162,1130 1158,1138'],
  [1, '690,1175 712,1170 720,1185 705,1198 690,1192'],
  [3, '710,1175 780,1180 790,1200 720,1203'],
  [0, '760,1190 900,1172 903,1185 770,1203'],
  [0, '652,820 675,795 685,802 670,820'],
  [0, '593,805 605,770 618,770 605,810'],
  [1, '1268,235 1278,250 1290,300 1282,302 1265,260'],
  [1, '1315,230 1328,245 1318,272'],
  [0, '1295,450 1310,445 1315,465 1300,465'],
  [3, '1295,1110 1300,1080 1312,1075 1312,1105'],
  [3, '1250,1100 1275,1095 1280,1110 1255,1118'],
];

const whitePlaces = '840,460 848,465 825,515 795,540 788,535 810,490';

/* Station coordinates, traced in a finer grid: upper half and lower half of the city. */
const stationsNorth = '861,135 845,162 834,192 822,228 813,250 800,285 795,323 795,356 795,404 791,450 941,225 909,280 879,332 844,392 823,418 954,430 936,462 920,478 894,500 877,521 862,534 822,541 795,549 769,560 748,566 720,577 698,557 713,518 745,500 773,491 690,601 703,607 672,616 680,637 658,622 650,660 636,680 635,635 611,700 588,686 594,637 562,672 559,627 543,655 749,238 726,275 749,303 700,310 714,312 690,350 675,345 676,382 660,373 662,410 648,396 645,443 634,425 630,465 618,454 606,476 611,505 593,501 592,540 579,527 562,572 668,216 660,250 644,281 625,303 600,332 583,342 554,357 562,387 526,396 545,416 511,436 530,448 505,462 503,499 506,525 483,538 497,555 461,578 487,588 520,595 450,605 518,612 430,641 473,630 502,648 455,666 483,687 408,687 445,702 515,706 397,712 467,718 430,730 392,734 498,739 455,745 420,752 490,762 374,765 406,776 478,783 357,796 459,808 339,821 377,836 477,819 331,854 438,845 458,855 357,869 331,881 425,880 333,908 431,907 405,915 337,932 372,935 396,941 312,945 325,957 365,960 390,971 301,972 337,980 251,984 286,1000 332,994 357,1006 309,1016 268,1023 294,1035 277,1044 325,1040 254,1066 302,1062 322,1055 270,1085 258,1112 299,1100 320,1112 290,1125 337,1122 246,1148 282,1148 302,1165 272,1172 240,1168 232,1190 262,1190 310,1192 285,1185 226,1215 245,1213 300,1221 215,1238 240,1235 200,1255 225,1260 207,1282 620,871 597,897 581,916 563,946 549,975 585,972 614,975 500,993 535,998 475,1010 519,1020 492,1034 458,1045 470,1055 450,1055 643,996 667,1010 543,1044 572,1047 597,1052 618,1045 655,1037 680,1030 703,1028 733,1026 762,1019 791,1017 818,1013 848,999 887,984 949,955 739,1053 760,1085 791,1106 823,1126 859,1142 893,1170 924,1192 949,1214 989,1240 449,1118 463,1158 1138,1220 1098,1232 1059,1249 1027,1262 1004,1276 1069,1280 1040,1290';
const stationsSouth = '441,180 461,204 492,193 508,212 431,228 455,240 480,240 509,234 535,243 468,273 504,273 578,240 597,256 640,262 658,252 685,240 711,211 620,279 590,284 561,288 526,293 555,315 580,335 603,353 654,300 654,338 628,370 650,373 303,270 318,280 300,285 290,292 318,295 303,318 324,333 300,356 345,345 372,356 400,344 428,339 455,335 472,307 345,375 365,385 405,374 441,383 470,388 506,390 546,392 586,396 625,400 650,400 282,390 330,407 375,407 438,418 411,434 431,447 467,459 501,450 539,453 282,431 309,441 291,474 341,468 345,503 421,495 468,490 470,522 423,530 270,503 249,532 365,555 420,555 473,556 476,587 222,568 285,580 204,589 191,610 287,612 345,594 411,590 415,612 477,617 169,647 217,647 285,640 354,640 418,645 481,657 160,677 242,667 281,667 358,675 424,678 278,704 361,703 428,704 148,717 302,727 269,735 369,727 327,747 433,746 140,750 261,771 338,779 374,763 440,795 378,796 257,801 343,822 382,826 270,820 292,834 317,858 353,858 448,846 378,866 451,871 354,886 330,909 374,905 456,920 374,950 341,972 369,980 398,978 428,969 776,333 803,323 832,317 863,309 893,300 923,290 958,270 776,369 755,377 730,388 703,399 670,400 685,418 710,430 748,422 783,413 812,404 838,392 865,387 897,384 921,376 944,364 969,352 664,450 580,474 606,495 636,489 662,481 690,475 712,470 737,465 674,508 673,556 664,579 929,430 936,453 952,497 1007,790 933,950 966,937 993,924 1022,909 1089,890 1124,882 1173,878 1206,863 1233,837 1258,815';

const toStations = (s: string, dy: number) =>
  s.split(' ').map(p => {
    const [x, y] = p.split(',').map(Number);
    return [300 + x / 2.8, dy + y / 3];
  });
const stations = [...toStations(stationsNorth, 0), ...toStations(stationsSouth, 340)];

const landOf = (d: District) =>
  d.id.startsWith('bronx') ? BRONX : d.id.startsWith('queens') || d.id.startsWith('brooklyn') ? QUEENS_BROOKLYN : d.poly;

const CityMap = () => (
  <MapDrawing viewBox="0 0 860 880">
    <g transform="scale(.54847 .56122)">
      <polygon points={WATER} fill="#c4d5d9" />
      <path d="M850 1180Q880 1215 865 1225L620 1272M860 1220L1110 1165L1180 1100M985 1250L1022 1440M575 935L580 1010L620 1080L625 1270L610 1420M380 1370L450 1440M895 155L945 180M990 440Q1120 400 1265 420M1262 420L1268 450" stroke="#bccfd4" strokeWidth="1.200" fill="none" />
      <path d="M928 33L895 150L850 240L810 340L740 450L680 580L658 690L650 770" stroke="#a9b6b9" strokeWidth="1.500" fill="none" />
      {districts.map(d => {
        const cx = (d.box[0] + d.box[2]) / 2;
        const cy = (d.box[1] + d.box[3]) / 2;
        return (
          <g key={d.id}>
            <clipPath id={`clip-${d.id}`}><polygon points={d.poly} /></clipPath>
            <clipPath id={`land-${d.id}`}><polygon points={landOf(d)} /></clipPath>
            <g clipPath={`url(#land-${d.id})`}>
              <g clipPath={`url(#clip-${d.id})`}>
                <g transform={`rotate(${d.angle} ${cx} ${cy})`} stroke="#111" strokeWidth={d.line}>
                  {tracts(d).map((p, i) => <path key={i} d={p} fill={SHADES[i]} />)}
                </g>
              </g>
            </g>
          </g>
        );
      })}
      {[STATEN, QUEENS_BROOKLYN, MANHATTAN, BRONX].map((p, i) => (
        <polygon key={i} points={p} fill="none" stroke="#8c9496" strokeWidth="2" />
      ))}
      {patches.map(([k, p], i) => <polygon key={i} points={p} fill={SHADES[k]} stroke="#222" strokeWidth="1.600" strokeLinejoin="round" />)}
      {islands.map(([k, p], i) => <polygon key={i} points={p} fill={SHADES[k]} stroke="#8f9496" strokeWidth="1.500" strokeLinejoin="round" />)}
      <path d="M593 805L605 770L618 770L605 810ZM985 545L1050 530L1105 555M1160 725L1260 720L1345 690L1430 685M960 890L1060 860L1200 880M835 790L1000 760M1240 820L1210 745M940 1010V1075L900 1055M860 885H935V1000" fill="none" stroke="#111" strokeWidth="3" />
      <polygon points={whitePlaces} fill={SHADES[0]} stroke="#555" />
      <clipPath id="clip-rockaway"><polygon points={ROCKAWAY} /></clipPath>
      <g clipPath="url(#clip-rockaway)" stroke="#222" strokeWidth="2">
        <rect x="870" y="1040" width="560" height="270" fill="#fafafa" />
        <path d="M870 1200L975 1215L985 1255L880 1310Z" fill="#bababa" />
        <path d="M1085 1180L1150 1150V1190L1085 1220Z" fill="#bababa" />
        <path d="M1150 1140L1330 1080L1335 1140L1150 1190Z" fill="#808080" />
        <path d="M1330 1050H1395V1140H1330Z" fill="#404040" />
        <path d="M1395 1050H1420V1140H1390Z" fill="#bababa" />
        <path d="M1035 1200L1045 1240M1105 1170L1112 1205M1125 1165L1130 1200M1175 1150V1180M1200 1145V1170M1230 1130V1160M1300 1100V1140" />
      </g>
      <polygon points={ROCKAWAY} fill="none" stroke="#8a8a8a" strokeWidth="1.500" />
      <path d="M950 42L1085 82M1140 118L1258 151M1372 488L1500 590L1506 630L1486 670L1432 686L1439 740L1442 925M1178 888Q1290 870 1350 920T1390 985L1330 1018V1040" stroke="#111" strokeWidth="3" fill="none" />
      <path d="M948 185Q930 240 895 285Q885 340 893 400L905 430M842 560L800 640M960 1000L1040 960L1085 955M1130 600L1172 700M1190 170L1230 215M1135 300V370M1085 360L1100 400M880 650L925 690M800 890L812 925" stroke="#c4d5d9" strokeWidth="6" fill="none" />
      <path d="M245 1115L225 1150L240 1180L215 1195M185 1190L230 1195L262 1225L300 1220M845 640L935 690M1080 1020L1110 1015M1100 1045L1130 1030M1395 940L1408 980M1350 1050L1400 1060" stroke="#c4d5d9" strokeWidth="4" fill="none" />
      <path d="M1187 975L1205 1060L1218 1105M1140 170L1118 200L1095 240M895 360L905 430M860 570L830 560M770 715L820 735M900 590H950M1165 910L1175 935M775 1150L790 1170" stroke="#6fae3c" strokeWidth="2" fill="none" strokeDasharray="9 3" />
    </g>
    <g fill="#5edaf3" stroke="#12343d" strokeWidth="1">
      {stations.map(([x, y], i) => <circle key={i} cx={x} cy={y} r="4.700" />)}
    </g>
  </MapDrawing>
);

/* ---------- sheet contents ---------- */

const legend: { name: string; fill: string; top: number; base: number }[] = [
  { name: '0 - 2628', fill: '#fafafa', top: 1037, base: 1058.5 },
  { name: '2628 - 4436', fill: '#bababa', top: 1069, base: 1090.5 },
  { name: '4436 - 6650', fill: '#808080', top: 1102, base: 1122 },
  { name: '6650 - 10976', fill: '#404040', top: 1134, base: 1156 },
  { name: '10976 - 29256', fill: '#000000', top: 1166, base: 1188.5 },
];

const Swatch = styled.div<{ $y: number; $c: string }>`
  position: absolute;
  left: 306px;
  top: ${p => p.$y}px;
  width: 38px;
  height: 23px;
  border: 2px solid #4d4d4d;
  background: ${p => p.$c};
`;

const handles = [[11, 7], [232.5, 7], [453, 7], [11, 51], [453, 51], [11, 94.5], [232.5, 94.5], [453, 94.5]];

const ScaleBarSelection = () => (
  <SelectionDrawing viewBox="0 0 480 120">
    <g>
      <rect x="19" y="45" width="384" height="17" fill="#fff" stroke="#777" strokeWidth="2" />
      <path d="M19 49.500H147M275 49.500H403" stroke="#000" strokeWidth="9" />
      <path d="M147 57.500H275" stroke="#000" strokeWidth="9" />
      <path d="M18 45H404" stroke="#555" strokeWidth="2" />
    </g>
    <path d="M5 7V115M467.500 7V115" stroke="#666" strokeWidth="2" strokeDasharray="18 14" strokeDashoffset="11" />
    <path d="M11 7V115M473 7V115" stroke="#3a8fc4" strokeWidth="2" />
    <path d="M4 7H473M11 115H473" stroke="#3a8fc4" strokeWidth="2" />
    <path d="M11 7H473M11 115H473" stroke="#5a1033" strokeWidth="2" strokeDasharray="20 12" strokeDashoffset="4" />
    {handles.map(([x, y], i) => (
      <rect key={i} x={x} y={y} width="20" height="20" fill="#fff" stroke="#3a8fc4" strokeWidth="2" />
    ))}
    <path d="M467.500 8V18M467.500 56V70M467.500 96V114" stroke="#666" strokeWidth="2" />
    <path d="M15 29h6" stroke="#111" strokeWidth="2" />
  </SelectionDrawing>
);

/* ---------- small dock pieces ---------- */

const Chevrons = ({ c, w = 2 }: { c: string; w?: number }) => (
  <svg width="14" height="26" viewBox="0 0 14 26">
    <path d="M2 8L7 3L12 8M2 18L7 23L12 18" fill="none" stroke={c} strokeWidth={w} />
  </svg>
);

const Select = ({ value, w }: { value: string; w: number }) => (
  <SelectBox $w={w}>
    <SelectValue>{value}</SelectValue>
    <SelectArrows><Chevrons c="#fff" w={3} /></SelectArrows>
  </SelectBox>
);

const SpinField = ({ value, w = 264, dim, clear }: { value: string; w?: number; dim?: boolean; clear?: boolean }) => (
  <>
    <Field $w={w} $dim={dim}>
      {value}
      {clear && (
        <ClearMark viewBox="0 0 22 18">
          <path d="M0 9L6 1H22V17H6Z" fill="#999" />
          <path d="M9 5L17 13M17 5L9 13" stroke="#fff" strokeWidth="2" />
        </ClearMark>
      )}
    </Field>
    <Spinner $dim={dim}><Chevrons c={dim ? '#8c8c8c' : '#333'} w={2.6} /></Spinner>
  </>
);

const CloseMark = () => (
  <CloseIcon viewBox="0 0 28 28">
    <circle cx="14" cy="14" r="13.500" fill="#454545" />
    <path d="M9 9L19 19M19 9L9 19" stroke="#fff" strokeWidth="4" />
  </CloseIcon>
);

const Down = () => <Triangle viewBox="0 0 24 24"><path d="M1 4H23L12 18Z" fill="#474747" /></Triangle>;
const Right = () => <Triangle viewBox="0 0 24 24"><path d="M6 -3V19L20 8Z" fill="#474747" /></Triangle>;

const TickMark = () => (
  <svg width="24" height="23" viewBox="0 0 24 23"><path d="M6 12L10 18L18 4" fill="none" stroke="#969696" strokeWidth="2.600" /></svg>
);

const EyeIcon = styled.svg`
  width: 30px;
  height: 24px;
  margin-top: 5px;
`;

const rows: { name: string; bold?: boolean; sel?: boolean }[] = [
  { name: '<scale bar>', bold: true },
  { name: 'NYC Open Data. 2016 Amer...' },
  { name: 'NYC Population Map 2016' },
  { name: '<legend>', sel: true },
];

export default function App() {
  return (
    <Window>
      <GlobalStyle />
      <TopStrip />
      <Toolbar>
        <GripDots x={-6} />
        <ToolSlot><Icon viewBox="0 0 48 48"><Disk /></Icon></ToolSlot>
        <VSeparator />
        <Tools items={fileTools} />
        <VSeparator />
        <Tools items={exportTools} />
        <GripDots />
        <Tools items={zoomTools} />
        <GripDots x={8} />
        <Tools items={arrangeTools} />
        <GripDots />
        <Tools items={atlasLeft} />
        <PageCombo>
          <PageValue>1</PageValue>
          <PageArrow><svg width="16" height="16" viewBox="0 0 16 16"><path d="M2 3L8 10L14 3" fill="none" stroke="#888" strokeWidth="2.500" /></svg></PageArrow>
        </PageCombo>
        <Tools items={atlasRight} />
      </Toolbar>

      <Body>
        <SideTools>
          <SideGrip>
            {Array.from({ length: 12 }, (_, i) => (
              <circle key={i} cx={10 + i * 4} cy={i % 2 ? 18 : 13} r="2" fill="#f4f4f4" stroke="#ccc" strokeWidth=".6" />
            ))}
          </SideGrip>
          {sideA.map(t => (
            <SideSlot key={t.id} $active={t.id === 'select'}><Icon viewBox="0 0 48 48">{t.draw}</Icon></SideSlot>
          ))}
          <HSeparator />
          {sideB.map(t => (
            <SideSlot key={t.id}><Icon viewBox="0 0 48 48">{t.draw}</Icon></SideSlot>
          ))}
        </SideTools>

        <Centre>
          <HorizontalRuler />
          <VerticalRuler />
          <Viewport>
            <Scene>
              <Sheet $x={268} $y={268} $w={1612} $h={1142} $c="#979797" />
              <Sheet $x={264} $y={264} $w={1606} $h={1134} $c="#8a8a8a" />
              <Sheet $x={264} $y={264} $w={1604} $h={1134} $c="#fff" />
              <Sheet $x={272} $y={176} $w={1588} $h={90} $c="#fff" />
              <Sheet $x={264} $y={264} $w={2} $h={1135} $c="#ff3b30" />
              <Sheet $x={264} $y={1430} $w={1606} $h={2} $c="#ff3b30" />
              <CityMap />
              <SceneText $x={326} $y={422} $s={68.5} $b>NYC Population Map{'\n'}2016</SceneText>
              <SceneText $x={307} $y={1021} $s={22.3}>Population</SceneText>
              {legend.map(l => (
                <React.Fragment key={l.name}>
                  <Swatch $y={l.top} $c={l.fill} />
                  <SceneText $x={361.5} $y={l.base} $s={22.5}>{l.name}</SceneText>
                </React.Fragment>
              ))}
              <SceneText $x={1455} $y={1311} $s={18.9}>{' NYC Open Data. 2016 American Community'}</SceneText>
              <SceneText $x={1455} $y={1331} $s={18.9}>Survey Population Estimates</SceneText>
              <SceneText $x={410} $y={1346} $s={22.3}>7.5</SceneText>
              <SceneText $x={542} $y={1346} $s={22.3}>15</SceneText>
              <SceneText $x={660} $y={1346} $s={22.3}>22.5 km</SceneText>
              <ScaleBarSelection />
            </Scene>
          </Viewport>
          <ScrollTrack><ScrollThumb /></ScrollTrack>
        </Centre>

        <Dock>
          <TabStrip>
            <TabGroup>
              <Tab $w={106} $pl={20}>Items</Tab>
              <Tab $w={247} $pl={23} $lit>Command history</Tab>
            </TabGroup>
          </TabStrip>
          <DockTitle $line={4}>
            <CloseMark />
            <DockName>Items</DockName>
          </DockTitle>
          <ItemArea>
            <ItemTable>
              <HeadRow>
                <HeadCell>
                  <EyeIcon viewBox="0 0 30 24">
                    <path d="M1 13Q14 0 29 13Q14 25 1 13Z" fill="#f6f6f6" stroke="#b0b0b0" strokeWidth="1.500" />
                    <path d="M1 8Q14 -2 28 6" fill="none" stroke="#c4c4c4" strokeWidth="2" />
                    <circle cx="14.500" cy="12.500" r="7.500" fill="#7aa5d6" stroke="#5d83b3" />
                    <circle cx="14.500" cy="12.500" r="2.600" fill="#111" />
                  </EyeIcon>
                </HeadCell>
                <HeadCell>
                  <svg width="30" height="30" viewBox="4 0 40 46"><Lock /></svg>
                </HeadCell>
                <HeadCell>Item</HeadCell>
              </HeadRow>
              {rows.map(r => (
                <ItemRow key={r.name} $sel={r.sel} $bold={r.bold}>
                  <Check $dim={r.sel}><TickMark /></Check>
                  <Check $dim={r.sel} />
                  <ItemName>{r.name}</ItemName>
                </ItemRow>
              ))}
            </ItemTable>
            <SideTrack><ScrollThumb $h={112} /></SideTrack>
          </ItemArea>

          <TabStrip>
            <TabGroup>
              <Tab $w={184} $pl={17} $lit>Composition</Tab>
              <Tab $w={219} $pl={26}>Item properties</Tab>
            </TabGroup>
          </TabStrip>
          <DockTitle $line={2}>
            <CloseMark />
            <DockName>Item properties</DockName>
          </DockTitle>
          <Subject>Scalebar</Subject>
          <PropArea>
            <PropList>
              <SectionHead><Down />Main properties</SectionHead>
              <Group $h={139} $pt={23}>
                <Row $h={52}><RowLabel $lh={34}>Map</RowLabel><Select value="Map 0" w={528} /></Row>
                <Row $h={52}><RowLabel $lh={34}>Style</RowLabel><Select value="Double Box" w={528} /></Row>
              </Group>

              <SectionHead $mt={22}><Down />Units</SectionHead>
              <Group $h={201} $pt={21}>
                <Row $h={54}><RowLabel $lh={35}>Scalebar units</RowLabel><Select value="Meters" w={362} /></Row>
                <Row $h={60}><RowLabel $lh={39}>Label unit multiplier</RowLabel><SpinField value="1000.000000" w={324} /></Row>
                <Row $h={44}><RowLabel $lh={34}>Label for units</RowLabel><PlainField>km</PlainField></Row>
              </Group>

              <SectionHead $mt={21}><Down />Segments</SectionHead>
              <Group $h={395} $pt={24}>
                <Row $h={60}><RowLabel $lh={38}>Segments</RowLabel><SpinField value="left 0" /></Row>
                <Row $h={60}><RowLabel $lh={37} /><SpinField value="right 3" clear /></Row>
                <Row $h={60}><RowLabel $lh={40}><Radio $on />Fixed width</RowLabel><SpinField value="7500.000000 units" /></Row>
                <Row $h={60}><RowLabel $lh={40}><Radio />Fit segment width</RowLabel><SpinField value="min 50.00 mm" dim /></Row>
                <Row $h={60}><RowLabel $lh={37} /><SpinField value="max 150.00 mm" dim /></Row>
                <Row $h={60}><RowLabel $lh={38}>Height</RowLabel><SpinField value="3.00 mm" /></Row>
              </Group>

              <SectionHead $mt={21}><Right />Display</SectionHead>
              <SectionHead $mt={10}><Right />Fonts and colors</SectionHead>
              <SectionHead $mt={21}><Right />Position and size</SectionHead>
            </PropList>
            <SideTrack><ScrollThumb $h={520} /></SideTrack>
          </PropArea>
        </Dock>
      </Body>

      <StatusBar>
        <StatusCell $w={213} $ml={-3}>x: 0 mm</StatusCell>
        <StatusCell $w={212}>y: -27.0337 mm</StatusCell>
        <StatusCell $w={212}>page: 1</StatusCell>
        <ZoomCombo>
          95.3%
          <ZoomArrow><svg width="16" height="10" viewBox="0 0 16 10"><path d="M2 2L8 7L14 2" fill="none" stroke="#fff" strokeWidth="3" /></svg></ZoomArrow>
        </ZoomCombo>
        <StatusCell $w={400}>dx: 1 mm dy: -0.103582 mm</StatusCell>
      </StatusBar>

      <Ring $x={562} $y={1} $w={295} $h={96} $c="#70f8ff" $b={6} />
      <Ring $x={-14} $y={655} $w={128} $h={57} $c="#ee58f8" $b={4} />
      <Ring $x={-14} $y={819} $w={128} $h={57} $c="#ee58f8" $b={4} />
      <Frame />
      <Resizer viewBox="0 0 18 18"><path d="M2 18L18 2M9 18L18 9" stroke="#888" strokeWidth="1.500" /></Resizer>
    </Window>
  );
}
